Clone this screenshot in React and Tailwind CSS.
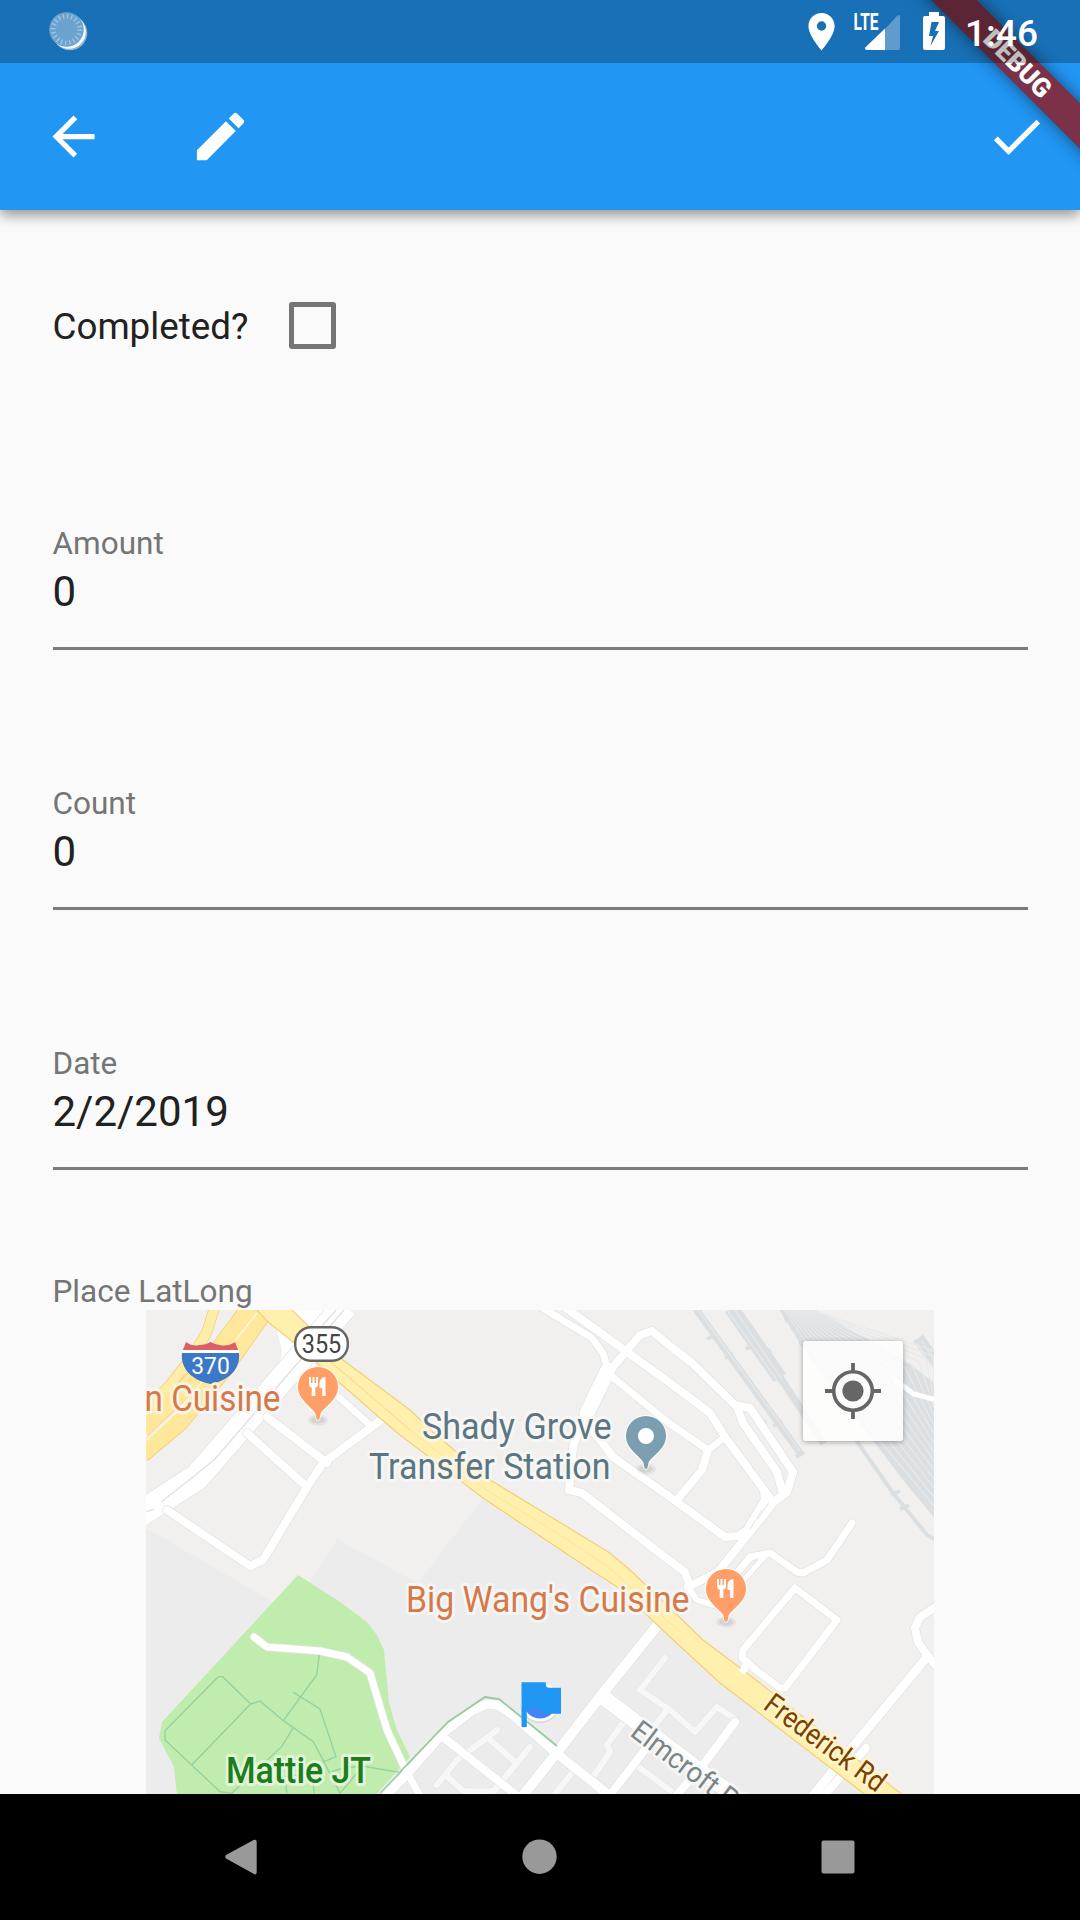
import React from "react";

const FIELDS = [
  { label: "Amount", value: "0" },
  { label: "Count", value: "0" },
  { label: "Date", value: "2/2/2019" },
];

// White streets, drawn with a thin grey casing: [points, width]
const STREETS = [
  ["340,1398 372,1427", 7],
  ["381,1420 323,1463 307,1487 263,1560 250,1566 167,1510", 8],
  ["267,1417 327,1463", 8],
  ["247,1433 307,1487", 8],
  ["541,1307 592,1338 603,1353 608,1370", 7],
  ["566,1308 670,1383 710,1413 725,1437 770,1498", 8],
  ["608,1373 640,1335 652,1331 670,1346 692,1363 735,1405 750,1408 793,1472 787,1492 774,1502 718,1572 688,1587", 8],
  ["737,1407 743,1423 777,1472 783,1494", 8],
  ["608,1370 587,1413", 15],
  ["585,1413 573,1447 569,1490 582,1493 670,1561 685,1572 690,1587", 8],
  ["610,1375 670,1424 708,1450 725,1437", 7],
  ["708,1450 702,1470 677,1500", 8],
  ["591,1428 613,1457 670,1497 725,1537 738,1536 747,1530 765,1500 764,1490", 8],
  ["852,1523 827,1560 803,1573 797,1572 770,1553 750,1557 730,1582", 7],
  ["766,1555 742,1582", 5],
  ["795,1588 837,1620 785,1688 780,1688 757,1671 742,1658 743,1650 795,1588", 7],
  ["747,1662 741,1675", 7],
  ["937,1606 920,1617 915,1628 918,1642 927,1655 937,1667", 8],
  ["927,1657 850,1750 803,1808", 9],
  ["866,1748 820,1800", 8],
  ["687,1586 697,1600 713,1605", 6],
  ["660,1622 603,1693 555,1755 517,1803", 10],
  ["603,1697 670,1748 745,1804", 15],
  ["380,1802 407,1774 443,1733 473,1710 487,1704 498,1705 513,1715 555,1752 615,1800", 9],
  ["254,1637 267,1647 320,1651 347,1657 370,1673 387,1730 407,1773 425,1804", 7],
  ["443,1737 525,1802", 8],
  ["735,1722 703,1765 668,1805", 8],
  ["647,1747 604,1803", 8],
];

// Faint service lanes
const LANES = [
  "497,1730 457,1760 437,1785",
  "488,1738 515,1762",
  "530,1747 493,1792",
  "448,1777 463,1791 483,1792 492,1791",
  "665,1658 640,1690 670,1710 695,1732 717,1707 735,1719",
  "667,1710 650,1732",
  "623,1723 607,1745 610,1752 593,1777",
  "573,1772 550,1800",
  "633,1763 675,1794",
];

const PARK_PATHS = [
  "235,440 75,602 75,630 240,785 275,790",
  "235,440 248,440 332,522 155,705",
  "332,522 360,513 430,572 520,635 570,730 600,790",
  "460,487 540,537 588,680 552,695",
  "538,375 530,435 430,572",
  "460,593 425,650 275,790",
  "575,725 600,717 665,708 780,727 720,790",
  "665,712 600,790",
  "440,790 435,740 455,735 520,745 522,790",
];

const YARD_LINES = Array.from({ length: 15 }, (_, i) => i);

function Halo({ children, x, y, len, fill, size = 36, weight = 400, transform, halo = "#f8f8f6" }) {
  return (
    <text
      x={x}
      y={y}
      textLength={len}
      lengthAdjust="spacingAndGlyphs"
      fontSize={size}
      fontWeight={weight}
      fill={fill}
      transform={transform}
      stroke={halo}
      strokeOpacity="0.75"
      strokeWidth="6"
      strokeLinejoin="round"
      paintOrder="stroke"
    >
      {children}
    </text>
  );
}

function Pin({ x, y, color, children }) {
  return (
    <g transform={`translate(${x} ${y})`}>
      <ellipse cx="0" cy="33" rx="10" ry="5.500" fill="#000" opacity="0.05" />
      <ellipse cx="0" cy="33" rx="7" ry="3.500" fill="#000" opacity="0.07" />
      <path
        d="M0 33C-1.500 33-1.800 30-2.500 27C-4 21-20 14-20 0A20 20 0 0 1 20 0C20 14 4 21 2.500 27C1.800 30 1.500 33 0 33Z"
        fill={color}
        stroke="#fff"
        strokeOpacity="0.7"
        strokeWidth="2.500"
        paintOrder="stroke"
      />
      {children}
    </g>
  );
}

function Cutlery() {
  return (
    <g fill="#fff">
      <path d="M-9 -10h2v6h1.500v-6h2v6h1.500v-6h2v7q0 3-2.700 3.600V9h-3.600V.6Q-9 0-9-3Z" />
      <path d="M7.500 -10V9H4.200V1H1.500V-4Q2-9.500 7.500-10Z" />
    </g>
  );
}

function MapView() {
  return (
    <svg className="block h-[484px] w-[788px]" viewBox="146 1310 788 484" fontFamily="Roboto, sans-serif">
      <rect x="146" y="1310" width="788" height="484" fill="#f1f0ee" />
      <path d="M146 1528L273 1602L298 1578L310 1582L337 1539L418 1583L483 1498L592 1570L670 1637L720 1683L867 1795H146Z" fill="#ececec" />
      <path d="M298 1575L340 1602L367 1622L377 1635L384 1650L389 1703L397 1730L410 1757L375 1796H177L174 1767L159 1738L162 1722Z" fill="#c0ecae" />

      {/* Rail yard */}
      <g stroke="#dcdfe1" fill="none">
        <path d="M695 1308L800 1453" strokeWidth="7" />
        <path d="M731 1308L780 1378" strokeWidth="15" />
        <path d="M778 1374L824 1444" strokeWidth="7" />
        <path d="M856 1440L893 1493L927 1535L938 1541" strokeWidth="4" />
        <path d="M778 1308H812L903 1359L936 1384V1520L903 1480L803 1348Z" fill="#dcdfe1" stroke="none" />
        <path d="M918 1338L940 1368" strokeWidth="12" />
        <path d="M707 1339l8-4M725 1358l8-4M757 1426l9-5M773 1426l9-5M746 1349l8-4M762 1355l9-5M796 1457l8-5M891 1495l9-4M900 1509l9-4M785 1321l8-5M799 1344l8-5M823 1328l8-5" strokeWidth="4" />
      </g>
      <g stroke="#e7e9ea" strokeWidth="1.200" fill="none">
        {YARD_LINES.map((i) => (
          <path key={i} d={`M${784 + i * 2} 1310L${842 + i * 7} ${1395 - i * 3}L934 ${1506 - i * 9}`} />
        ))}
        <path d="M917 1343L934 1370M921 1340L936 1363M698 1310L800 1451M727 1310L779 1383M735 1310L783 1381" />
      </g>
      <path d="M895 1380L907 1389L914 1394L936 1400" fill="none" stroke="#fff" strokeWidth="5" />

      {/* Wide highway on the left */}
      <path d="M276 1326L282 1350L280 1365L262 1390L310 1375L340 1308H285Z" fill="#fff" />
      <g fill="none" strokeLinejoin="round">
        <path d="M345 1306L283 1378L197 1477L140 1514" stroke="#e3e3e1" strokeWidth="27" />
        <path d="M345 1306L283 1378L197 1477L140 1514" stroke="#fff" strokeWidth="25.500" />
      </g>

      {/* Lanes and streets */}
      <g fill="none" strokeLinejoin="round" strokeLinecap="round">
        {LANES.map((p) => <polyline key={p} points={p} stroke="#e6e6e6" strokeWidth="7.500" />)}
        {LANES.map((p) => <polyline key={p} points={p} stroke="#f7f7f7" strokeWidth="6" />)}
        {STREETS.map(([p, w]) => <polyline key={p} points={p} stroke="#e3e3e1" strokeWidth={w + 1.5} />)}
        {STREETS.map(([p, w]) => <polyline key={p} points={p} stroke="#fff" strokeWidth={w} />)}
        <path d="M762 1510L750 1529M768 1504L758 1519" stroke="#e3e3e1" />
      </g>
      <path d="M344 1310L290 1372L215 1459L193 1477L161 1502M336 1310L322 1326M154 1509L146 1512" fill="none" stroke="#e0e0df" strokeWidth="1.300" />

      {/* Footpaths */}
      <g transform="translate(140 1530) scale(.33333)" fill="none" stroke="#94d19f" strokeWidth="4">
        {PARK_PATHS.map((p) => <polyline key={p} points={p} />)}
      </g>
      <path d="M400 1772L448 1722L485 1697L499 1699L557 1746" fill="none" stroke="#94cc9e" strokeWidth="1.800" />

      {/* Yellow roads */}
      <g fill="none" strokeLinejoin="round">
        <path d="M215 1306L207 1332L192 1357L170 1385L142 1415" stroke="#f6cd71" strokeWidth="11" />
        <path d="M251 1306L220 1348L187 1387L142 1429" stroke="#f6cd71" strokeWidth="18" />
        <path d="M267 1308L223 1370L180 1422L142 1454" stroke="#f6cd71" strokeWidth="18" />
        <path d="M215 1306L207 1332L192 1357L170 1385L142 1415" stroke="#ffeca8" strokeWidth="9.500" />
        <path d="M251 1306L220 1348L187 1387L142 1429" stroke="#ffe89c" strokeWidth="16.500" />
        <path d="M267 1308L223 1370L180 1422L142 1454" stroke="#ffe89c" strokeWidth="16.500" />
        <path d="M257 1313L218 1363L176 1413L142 1444" stroke="#fff6d8" strokeWidth="1.600" />
      </g>
      <path
        d="M268 1322L293 1342L380 1418L400 1435L483 1498L591 1570L617 1587L670 1637L720 1683L867 1796H904L747 1673L703 1640L670 1608L630 1570L610 1553L487 1478L433 1432L410 1410L343 1360L291 1309H256Z"
        fill="#fff0ad"
        stroke="#f3cf7b"
        strokeWidth="1.200"
      />
      <path d="M320 1353L345 1374L410 1430" fill="none" stroke="#f5d888" strokeWidth="1" />
      <path d="M410 1430L485 1489L560 1535L608 1567L680 1632" fill="none" stroke="#fae6a0" strokeWidth="1" />
      <path d="M747 1664L742 1673" stroke="#fff" strokeWidth="7" />

      {/* Route shields */}
      <g>
        <path d="M186 1342Q193 1347 199 1345Q206 1345 210.500 1342Q216 1345 222 1345.500Q229 1346 235 1342L238.500 1351H182.500Z" fill="#da6063" />
        <path d="M182 1350h57v3h-57Z" fill="#fff" />
        <path d="M182 1353H239C241 1370 227 1381 210.500 1384C194 1381 180 1370 182 1353Z" fill="#3c78c8" />
        <text x="210.500" y="1373.500" fontSize="24" fill="#fff" textAnchor="middle" textLength="38.500" lengthAdjust="spacingAndGlyphs">370</text>
        <rect x="295.200" y="1327.200" width="52.600" height="33.600" rx="16" fill="#fff" stroke="#666" strokeWidth="2.400" />
        <text x="321.500" y="1352.500" fontSize="25" fill="#444" textAnchor="middle" textLength="39.500" lengthAdjust="spacingAndGlyphs">355</text>
      </g>

      <Pin x="318" y="1387" color="#ff9e67"><Cutlery /></Pin>
      <Pin x="726" y="1589" color="#ff9e67"><Cutlery /></Pin>
      <Pin x="646" y="1436" color="#7b9fb0"><circle r="8" fill="#fff" /></Pin>

      <Halo x="144.500" y="1410.500" len="136" fill="#d5794b">n Cuisine</Halo>
      <Halo x="422" y="1438.500" len="189.500" fill="#5b7682">Shady Grove</Halo>
      <Halo x="369" y="1479" len="241.500" fill="#5b7682">Transfer Station</Halo>
      <Halo x="406" y="1612" len="283.500" fill="#d5794b">Big Wang's Cuisine</Halo>
      <Halo x="226" y="1783" len="145" fill="#1c7d1c" halo="#eef8e8" weight="500">Mattie JT</Halo>
      <Halo x="0" y="0" len="143" size="29" fill="#7a4100" halo="#fff6d0" transform="translate(762 1708) rotate(36.600)">Frederick Rd</Halo>
      <Halo x="0" y="0" len="132" size="29" fill="#7c8588" transform="translate(629 1735) rotate(37)">Elmcroft Pl</Halo>

      {/* Location dot and flag marker */}
      <circle cx="540" cy="1703" r="20" fill="#000" opacity="0.08" />
      <circle cx="540" cy="1702" r="19.500" fill="#fff" />
      <circle cx="540" cy="1702" r="16.500" fill="#4285f4" />
      <path d="M521.500 1682.300H545.700L546.200 1687.700H561V1713.700H542.500L541.800 1708.500H526.800V1727H521.500Z" fill="#2196f3" />
    </svg>
  );
}

function LocateButton() {
  return (
    <div className="absolute top-[31px] right-[31px] flex size-[100px] items-center justify-center rounded-[3px] bg-white/85 shadow-[0_1px_5px_rgba(0,0,0,0.35)]">
      <svg className="size-[56px]" viewBox="-28 -28 56 56">
        <circle r="19.300" fill="none" stroke="#666" strokeWidth="3.600" />
        <circle r="10.600" fill="#666" />
        <path d="M0-28v8M0 20v8M-28 0h8M20 0h8" stroke="#666" strokeWidth="3.800" />
      </svg>
    </div>
  );
}

function StatusBar() {
  return (
    <div className="absolute inset-x-0 top-0 h-[63px] bg-black/25">
      <svg className="block h-[63px] w-full" viewBox="0 0 1080 63" fontFamily="Roboto, sans-serif">
        <circle cx="70" cy="33" r="17.300" fill="#8db8db" />
        <circle cx="68.800" cy="31.800" r="17" fill="#fff" />
        <circle cx="66.500" cy="29.500" r="17.300" fill="#6ba2cf" />
        <circle cx="66.500" cy="29.500" r="13.300" fill="none" stroke="#a3c5e1" strokeWidth="5" strokeDasharray="1.300 2.882" />
        <path transform="translate(799.100 9.200) scale(1.870)" d="M12 2C8.130 2 5 5.130 5 9c0 5.250 7 13 7 13s7-7.750 7-13c0-3.870-3.130-7-7-7zm0 9.500a2.500 2.500 0 1 1 0-5 2.500 2.500 0 0 1 0 5z" fill="#fff" />
        <text x="853.500" y="29.700" fontSize="23" fontWeight="700" fill="#fff" textLength="25" lengthAdjust="spacingAndGlyphs">LTE</text>
        <path d="M885 29L897 16Q900 13.500 900 17V48Q900 50 898 50H885Z" fill="#5f9bcd" />
        <path d="M885 28.500V50H866.500Q864 49 865.500 47.300Z" fill="#fff" />
        <path d="M929 12H939V16H943Q945 16 945 18V48Q945 50 943 50H925Q923 50 923 48V18Q923 16 925 16H929ZM931.500 22L929 36H933L930.500 46L939 31H935L939 22Z" fill="#fff" fillRule="evenodd" />
        <text x="965" y="46" fontSize="37.500" fontWeight="500" fill="#fff" textLength="73" lengthAdjust="spacingAndGlyphs">1:46</text>
      </svg>
    </div>
  );
}

function ActionIcon({ d }) {
  return (
    <svg className="size-[63px] fill-white" viewBox="0 0 24 24">
      <path d={d} />
    </svg>
  );
}

function AppBar() {
  return (
    <header className="relative h-[210px] shrink-0 bg-[#2196f3] shadow-[0_5px_13px_rgba(0,0,0,0.42)]">
      <div className="flex h-full items-center pt-[63px] pr-[32px] pl-[42px]">
        <ActionIcon d="M20 11H7.830l5.590-5.590L12 4l-8 8 8 8 1.410-1.410L7.830 13H20v-2z" />
        <div className="ml-[84px] flex">
          <ActionIcon d="M3 17.250V21h3.750L17.810 9.940l-3.750-3.750L3 17.250zM20.710 7.040a.996.996 0 0 0 0-1.410l-2.340-2.340a.996.996 0 0 0-1.410 0l-1.830 1.830 3.750 3.750 1.830-1.830z" />
        </div>
        <div className="ml-auto flex">
          <ActionIcon d="M9 16.170L4.830 12l-1.420 1.410L9 19 21 7l-1.410-1.410z" />
        </div>
      </div>
      <div className="absolute inset-0 overflow-hidden">
        <div className="absolute top-[46.5px] left-[857px] flex h-[32px] w-[320px] rotate-45 items-center justify-center bg-[#7b3248] pl-[2px] text-[26.25px] leading-none font-black text-white shadow-[0_0_16px_rgba(0,0,0,0.5)]">
          DEBUG
        </div>
      </div>
      <StatusBar />
    </header>
  );
}

function Field({ label, value }) {
  return (
    <div className="mb-[135px] h-[125px] border-b-[3px] border-[#7b7b7b] pt-px">
      <div className="h-[41px] text-[31.5px] leading-[36px] text-[#757575]">{label}</div>
      <div className="text-[42px] leading-[50px] text-[#212121]">{value}</div>
    </div>
  );
}

function NavBar() {
  return (
    <nav className="flex h-[126px] shrink-0 items-center justify-center bg-black">
      <svg className="block h-[126px] w-full" viewBox="0 0 1080 126" fill="#999">
        <path d="M226 61L254 45.800Q256.700 45 256.700 48V78Q256.700 81.500 254 80L226 64.500Q224.500 62.700 226 61Z" />
        <circle cx="539.500" cy="62.700" r="17.200" />
        <rect x="821.500" y="46.500" width="33" height="33" rx="2" />
      </svg>
    </nav>
  );
}

export default function App() {
  return (
    <div className="flex h-[1920px] w-[1080px] flex-col overflow-hidden bg-[#fafafa] font-['Roboto',sans-serif]">
      <AppBar />
      <main className="min-h-0 flex-1 overflow-hidden px-[52.5px] pt-[92px]">
        <div className="mb-[175px] flex h-[48px] items-start">
          <span className="w-[236px] pt-px text-[36.75px] leading-[48px] text-[#212121]">Completed?</span>
          <span className="size-[47px] rounded-[3px] border-5 border-[#757575]" />
        </div>
        {FIELDS.map((f) => (
          <Field key={f.label} {...f} />
        ))}
        <div className="-mt-[32px] h-[37px] pt-px text-[31.5px] leading-[36px] text-[#757575]">Place LatLong</div>
        <div className="relative mx-auto w-[788px]">
          <MapView />
          <LocateButton />
        </div>
      </main>
      <NavBar />
    </div>
  );
}
